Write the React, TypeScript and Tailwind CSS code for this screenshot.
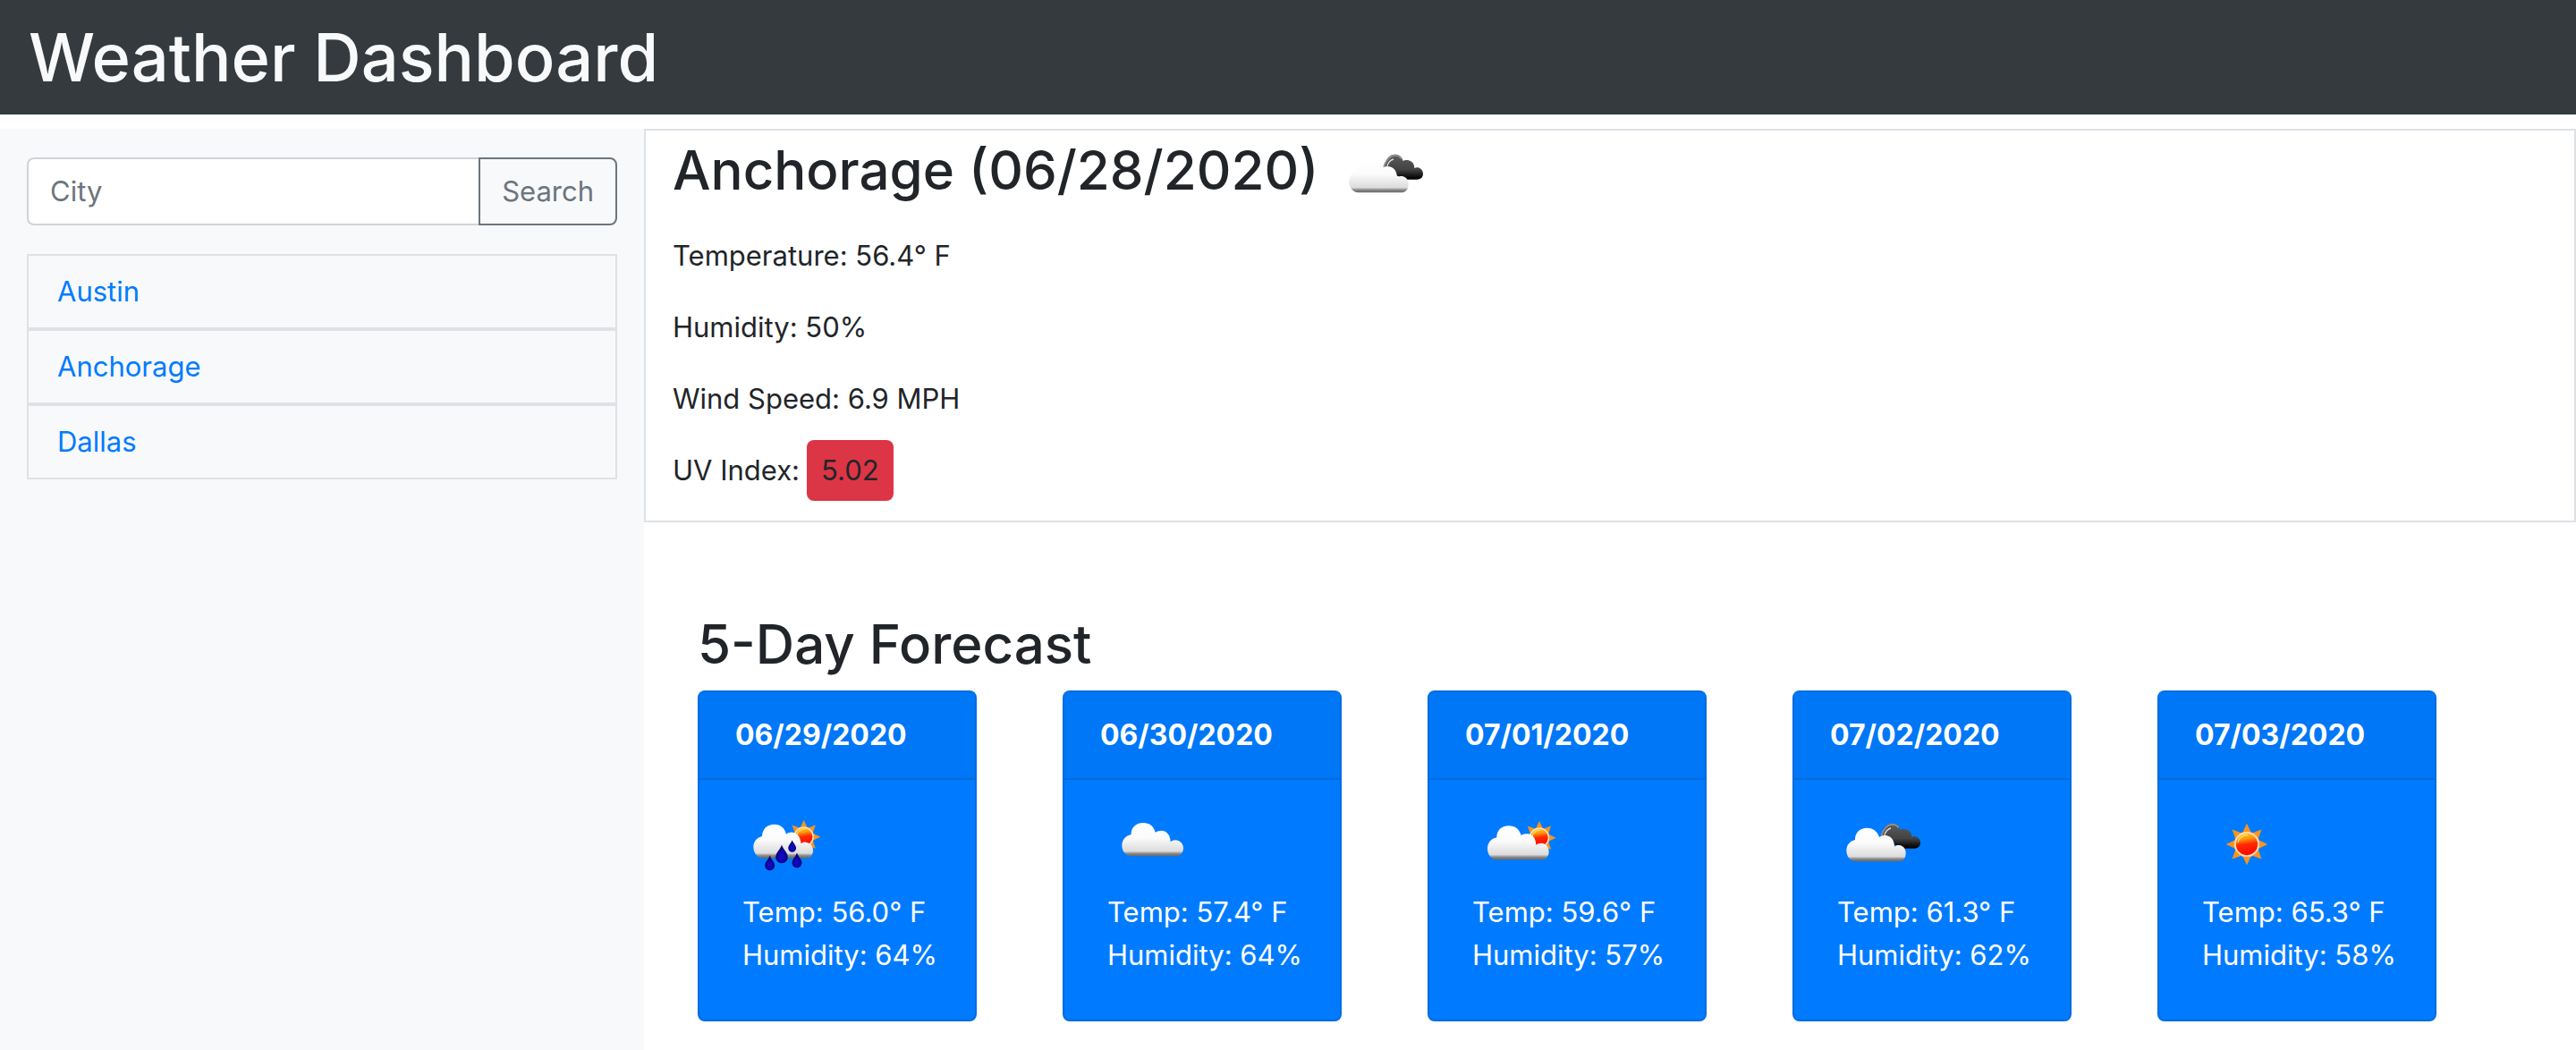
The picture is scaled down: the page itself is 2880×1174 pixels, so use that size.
import { useState } from "react";

type IconKind = "rain" | "cloud" | "partly" | "broken" | "sun";

function Gradients({ id }: { id: string }) {
  return (
    <defs>
      <linearGradient id={`${id}-white`} x1="0" y1="0" x2="0" y2="1">
        <stop offset="0" stopColor="#ffffff" />
        <stop offset="0.45" stopColor="#fbfbfb" />
        <stop offset="0.85" stopColor="#dcdcdc" />
        <stop offset="0.92" stopColor="#8a8a8a" />
        <stop offset="1" stopColor="#666666" />
      </linearGradient>
      <linearGradient id={`${id}-dark`} x1="0" y1="0" x2="0" y2="1">
        <stop offset="0" stopColor="#5c5c5c" />
        <stop offset="0.6" stopColor="#434343" />
        <stop offset="0.9" stopColor="#0c0c0c" />
        <stop offset="1" stopColor="#000000" />
      </linearGradient>
      <linearGradient id={`${id}-sun`} x1="0.4" y1="0" x2="0.55" y2="1">
        <stop offset="0" stopColor="#ffc828" />
        <stop offset="0.25" stopColor="#ff9a10" />
        <stop offset="0.5" stopColor="#ff2a00" />
        <stop offset="1" stopColor="#ff0000" />
      </linearGradient>
      <radialGradient id={`${id}-drop`} cx="0.5" cy="0.65" r="0.6">
        <stop offset="0" stopColor="#1208e0" />
        <stop offset="1" stopColor="#04045a" />
      </radialGradient>
    </defs>
  );
}

function Sun({ id, x, y }: { id: string; x: number; y: number }) {
  return (
    <g transform={`translate(${x} ${y})`}>
      {[0, 45, 90, 135, 180, 225, 270, 315].map((a) => (
        <path
          key={a}
          d="M-15 -38L0 -70L15 -38Z"
          fill="#f7941e"
          transform={`rotate(${a})`}
        />
      ))}
      <circle r="43" fill="#f7b070" />
      <circle r="39" fill={`url(#${id}-sun)`} stroke="#ffe3b8" strokeWidth="5" />
      <path d="M-30 -6A31 31 0 0 1 4 -31" fill="none" stroke="#ffe060" strokeWidth="4" />
    </g>
  );
}

function Drop({ id, x, y, s }: { id: string; x: number; y: number; s: number }) {
  return (
    <path
      d="M0 -32C5 -16 20 -6 20 9A20 20 0 0 1 -20 9C-20 -6 -5 -16 0 -32Z"
      fill={`url(#${id}-drop)`}
      transform={`translate(${x} ${y}) scale(${s})`}
    />
  );
}

const VIEW: Record<IconKind, string> = {
  rain: "30 -18 300 300",
  cloud: "24 -18 300 300",
  partly: "22 -18 300 300",
  broken: "42 -18 300 300",
  sun: "36 -18 300 300",
};

function WeatherIcon({ kind, id, label }: { kind: IconKind; id: string; label: string }) {
  const white = `url(#${id}-white)`;
  return (
    <svg viewBox={VIEW[kind]} className="size-[100px] shrink-0" role="img" aria-label={label}>
      <Gradients id={id} />
      {kind === "sun" && <Sun id={id} x={186} y={132} />}
      {kind === "cloud" && (
        <path
          d="M106 172C86 172 73 156 73 136C73 117 86 103 104 99C103 76 121 60 144 60C166 60 180 72 185 92C190 88 198 86 206 86C224 87 236 102 236 124C240 120 246 118 252 118C268 119 279 130 279 145C279 162 268 172 252 172Z"
          fill={white}
        />
      )}
      {kind === "partly" && (
        <>
          <g transform="translate(247 110)">
            <g transform="scale(0.8)">
              <Sun id={id} x={0} y={0} />
            </g>
          </g>
          <path
            d="M106 184C86 184 73 166 73 146C73 127 86 113 104 109C103 86 121 70 144 70C166 70 180 82 186 102C192 98 200 97 208 97C224 98 235 112 236 134C240 130 247 128 253 128C269 129 279 140 279 156C279 174 268 184 252 184Z"
            fill={white}
          />
        </>
      )}
      {kind === "broken" && (
        <>
          <path
            d="M188 106C196 78 208 62 226 62C240 62 250 70 254 84C260 80 274 80 282 86C290 92 292 100 292 108C304 102 320 110 321 126C321 140 312 146 300 146H262L225 130Z"
            fill={`url(#${id}-dark)`}
          />
          <path
            d="M190 104C198 78 212 66 226 65C236 65 244 70 248 76"
            fill="none"
            stroke="#8c8c8c"
            strokeWidth="6"
          />
          <path d="M200 104C204 88 212 80 222 78" fill="none" stroke="#dcdcdc" strokeWidth="4" />
          <path
            d="M104 190C86 190 73 172 73 154C73 134 85 121 102 117C101 92 119 77 142 77C164 77 178 90 183 108C189 103 197 101 205 102C222 104 234 118 234 140C238 136 244 134 250 135C264 137 272 147 272 161C272 180 262 190 246 190Z"
            fill={white}
          />
        </>
      )}
      {kind === "rain" && (
        <>
          <g transform="translate(236 107)">
            <g transform="scale(0.8)">
              <Sun id={id} x={0} y={0} />
            </g>
          </g>
          <path
            d="M100 179C81 179 67 161 67 141C67 122 80 109 96 105C97 80 113 65 137 65C159 65 172 78 177 98C183 93 191 91 199 92C214 94 225 108 227 130C231 126 237 124 243 125C258 127 267 138 267 152C267 169 257 179 243 179Z"
            fill={white}
          />
          <Drop id={id} x={162} y={166} s={1.02} />
          <Drop id={id} x={197} y={139} s={0.66} />
          <Drop id={id} x={122} y={196} s={0.82} />
          <Drop id={id} x={213} y={187} s={0.82} />
        </>
      )}
    </svg>
  );
}

const CITIES = ["Austin", "Anchorage", "Dallas"];

const FORECAST: { date: string; icon: IconKind; label: string; temp: string; humidity: string }[] = [
  { date: "06/29/2020", icon: "rain", label: "Rain", temp: "56.0", humidity: "64" },
  { date: "06/30/2020", icon: "cloud", label: "Scattered clouds", temp: "57.4", humidity: "64" },
  { date: "07/01/2020", icon: "partly", label: "Few clouds", temp: "59.6", humidity: "57" },
  { date: "07/02/2020", icon: "broken", label: "Broken clouds", temp: "61.3", humidity: "62" },
  { date: "07/03/2020", icon: "sun", label: "Clear sky", temp: "65.3", humidity: "58" },
];

export default function App() {
  const [city, setCity] = useState("");

  return (
    <div className="flex min-h-screen flex-col bg-white font-['Inter',sans-serif] text-[31px] leading-[48px] text-[#212529]">
      <header className="mb-4 bg-[#343a3d] px-8 py-4">
        <h1 className="text-[74px] leading-[96px] font-medium text-[#f8f9fa]">Weather Dashboard</h1>
      </header>

      <div className="flex grow">
        <aside className="w-1/4 bg-[#f8f9fa] px-[30px] pt-8">
          <form className="flex h-[76px]" onSubmit={(e) => e.preventDefault()}>
            <input
              type="text"
              aria-label="City"
              placeholder="City"
              value={city}
              onChange={(e) => setCity(e.target.value)}
              className="min-w-0 grow rounded-l-lg border-2 border-r-0 border-[#ced4da] bg-white px-6 outline-none placeholder:text-[#6c757d]"
            />
            <button
              type="submit"
              className="rounded-r-lg border-2 border-[#6c757d] px-6 text-[#6c757d]"
            >
              Search
            </button>
          </form>
          <ul className="mt-8">
            {CITIES.map((name) => (
              <li key={name} className="border-2 border-[#dee2e6] px-8 py-4">
                <a href="#" className="block text-[#007bff]">
                  {name}
                </a>
              </li>
            ))}
          </ul>
        </aside>

        <main className="w-3/4">
          <section className="border-2 border-[#dee2e6] px-[30px] pb-8">
            <div className="mb-4 flex h-[100px] items-start gap-6">
              <h2 className="text-[60px] leading-[88px] font-medium">Anchorage (06/28/2020)</h2>
              <WeatherIcon kind="broken" id="now" label="Broken clouds" />
            </div>
            <div className="flex flex-col gap-8">
              <p>Temperature: 56.4° F</p>
              <p>Humidity: 50%</p>
              <p>Wind Speed: 6.9 MPH</p>
              <p className="flex h-12 items-center gap-2">
                UV Index: <span className="rounded-lg bg-[#dc3545] px-4 py-[10px]">5.02</span>
              </p>
            </div>
          </section>

          <section className="mt-24 ml-[60px]">
            <h2 className="mb-3 text-[60px] leading-[80px] font-medium">5-Day Forecast</h2>
            <div className="mr-[156px] grid grid-cols-5 gap-24">
              {FORECAST.map((day) => (
                <article
                  key={day.date}
                  className="rounded-lg border-2 border-[#006cdf] bg-[#007bff] text-white"
                >
                  <h3 className="border-b-2 border-[#006bdf] bg-[#0077f7] px-10 py-6 text-[32px] leading-[48px] font-bold">
                    {day.date}
                  </h3>
                  <div className="pt-[22px] pr-8 pb-12 pl-12">
                    <WeatherIcon kind={day.icon} id={day.icon} label={day.label} />
                    <p className="mt-0.5">Temp: {day.temp}° F</p>
                    <p>Humidity: {day.humidity}%</p>
                  </div>
                </article>
              ))}
            </div>
          </section>
        </main>
      </div>
    </div>
  );
}
